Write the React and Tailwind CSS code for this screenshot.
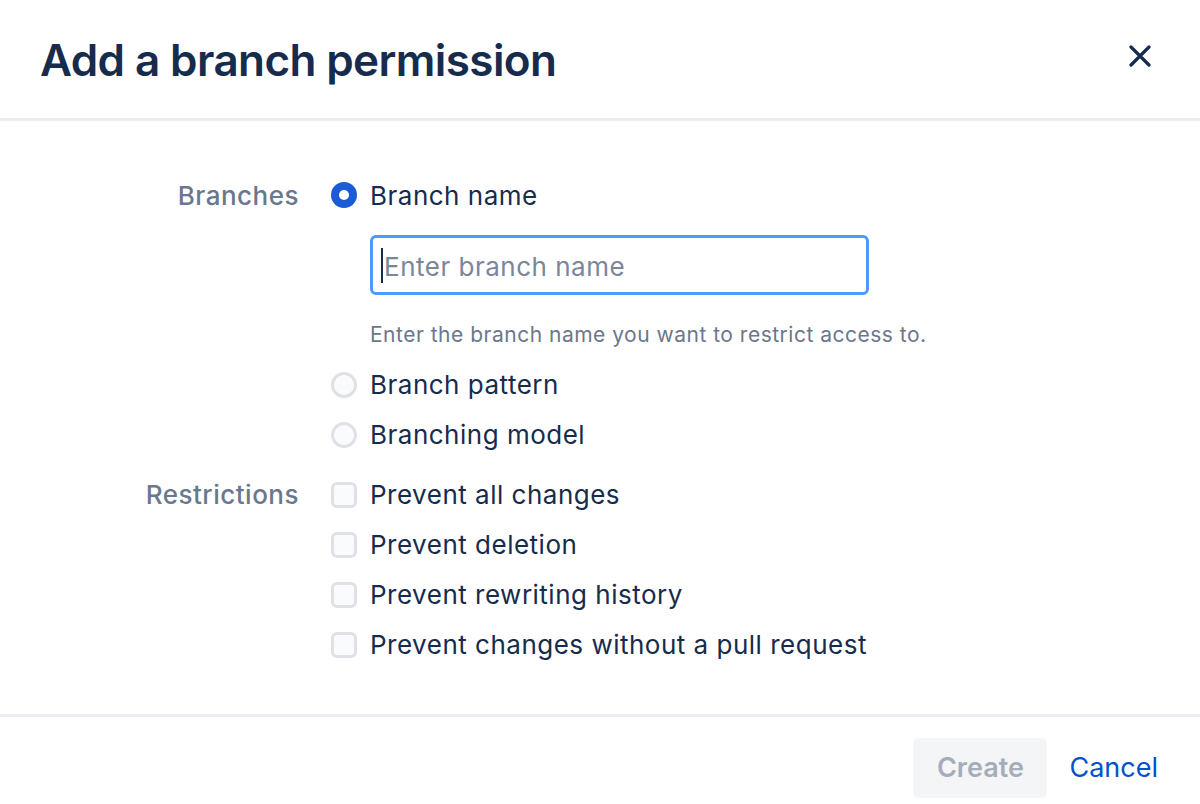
import React, { useState } from 'react';

const font = { fontFamily: 'Inter, "Noto Sans", sans-serif' };

const Radio = ({ checked }) => (
  <span
    className={`flex h-[26px] w-[26px] shrink-0 items-center justify-center rounded-full ${
      checked ? 'bg-[#1D5BD6]' : 'border-[3px] border-[#DFE1E6] bg-[#FAFBFC]'
    }`}
  >
    {checked && <span className="h-[10px] w-[10px] rounded-full bg-white" />}
  </span>
);

const Checkbox = () => (
  <span className="h-[26px] w-[26px] shrink-0 rounded-[6px] border-[3px] border-[#DFE1E6] bg-[#FAFBFC]" />
);

const Option = ({ children, control }) => (
  <div className="flex h-[50px] items-center gap-[13px]">
    {control}
    <span className="text-[26px] tracking-[0.5px] text-[#172B4D]">{children}</span>
  </div>
);

const restrictions = [
  'Prevent all changes',
  'Prevent deletion',
  'Prevent rewriting history',
  'Prevent changes without a pull request',
];

export default function App() {
  const [name, setName] = useState('');

  return (
    <div className="flex h-[804px] w-[1200px] flex-col bg-white" style={font}>
      {/* 헤더 */}
      <div className="flex h-[118px] items-center justify-between pl-[40px] pr-[49px]">
        <h1 className="pt-[2px] text-[44px] font-semibold tracking-[-0.6px] text-[#172B4D]">
          Add a branch permission
        </h1>
        <svg width="22" height="22" viewBox="0 0 22 22" className="mb-[6px] text-[#172B4D]">
          <path d="M2 2L20 20M20 2L2 20" stroke="currentColor" strokeWidth="3.2" strokeLinecap="round" />
        </svg>
      </div>
      <div className="h-[3px] bg-[#EBECF0]" />

      {/* 본문 */}
      <div className="flex-1 pt-[49px]">
        <div className="flex">
          <div className="w-[300px] pr-[1px]">
            <div className="flex h-[50px] items-center justify-end text-[26px] font-medium tracking-[0.5px] text-[#6B778C]">
              Branches
            </div>
          </div>
          <div className="pl-[31px]">
            <Option control={<Radio checked />}>Branch name</Option>
            <div className="pl-[39px] pt-[15px]">
              <div className="relative w-[499px]">
                <input
                  value={name}
                  onChange={(e) => setName(e.target.value)}
                  placeholder="Enter branch name"
                  className="h-[60px] w-full rounded-[6px] border-[3px] border-[#4C9AFF] px-[11px] pt-[3px] text-[26px] tracking-[0.5px] text-[#172B4D] placeholder-[#7A869A] outline-none"
                />
                {name === '' && (
                  <span className="absolute left-[11px] top-[13px] h-[35px] w-[2px] bg-[#172B4D]" />
                )}
              </div>
              <div className="pt-[24px] text-[21px] tracking-[0.5px] text-[#6B778C]">
                Enter the branch name you want to restrict access to.
              </div>
            </div>
            <div className="pt-[9px]">
              <Option control={<Radio />}>Branch pattern</Option>
              <Option control={<Radio />}>Branching model</Option>
            </div>
          </div>
        </div>

        <div className="flex pt-[10px]">
          <div className="w-[300px] pr-[1px]">
            <div className="flex h-[50px] items-center justify-end text-[26px] font-medium tracking-[0.5px] text-[#6B778C]">
              Restrictions
            </div>
          </div>
          <div className="pl-[31px]">
            {restrictions.map((r) => (
              <Option key={r} control={<Checkbox />}>
                {r}
              </Option>
            ))}
          </div>
        </div>
      </div>

      {/* 푸터 */}
      <div className="h-[3px] bg-[#EBECF0]" />
      <div className="flex h-[87px] items-start justify-end gap-[9px] pr-[29px] pt-[21px]">
        <button className="h-[60px] w-[134px] rounded-[6px] bg-[#F4F5F7] text-[27px] font-semibold text-[#A5ADBA]">
          Create
        </button>
        <button className="h-[60px] px-[13px] text-[27px] text-[#0052CC]">Cancel</button>
      </div>
    </div>
  );
}
